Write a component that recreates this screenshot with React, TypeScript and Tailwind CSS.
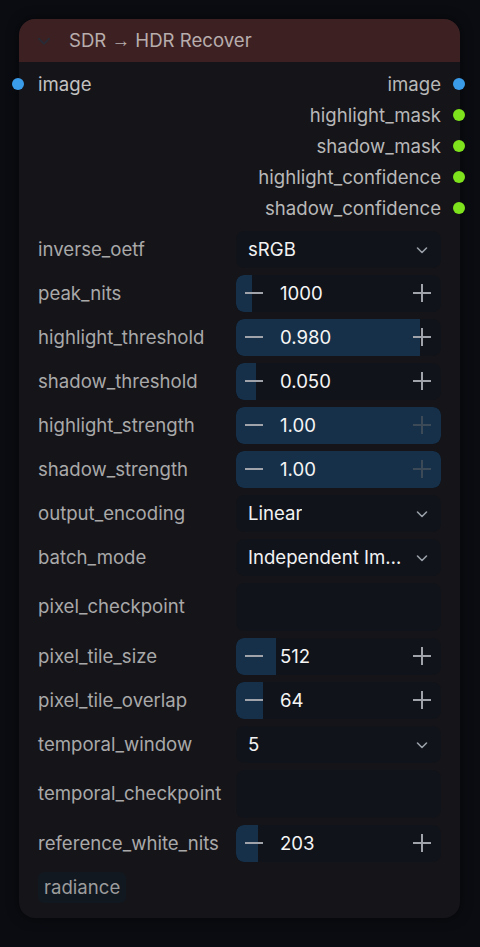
import React from 'react';

type Widget =
  | { kind: 'combo'; label: string; value: string }
  | { kind: 'number'; label: string; value: string; fill: number; atMax?: boolean }
  | { kind: 'text'; label: string };

const outputs = [
  { name: 'image', color: 'bg-[#3a9be9]' },
  { name: 'highlight_mask', color: 'bg-[#7ee21c]' },
  { name: 'shadow_mask', color: 'bg-[#7ee21c]' },
  { name: 'highlight_confidence', color: 'bg-[#7ee21c]' },
  { name: 'shadow_confidence', color: 'bg-[#7ee21c]' },
];

const widgets: Widget[] = [
  { kind: 'combo', label: 'inverse_oetf', value: 'sRGB' },
  { kind: 'number', label: 'peak_nits', value: '1000', fill: 16 },
  { kind: 'number', label: 'highlight_threshold', value: '0.980', fill: 184 },
  { kind: 'number', label: 'shadow_threshold', value: '0.050', fill: 20 },
  { kind: 'number', label: 'highlight_strength', value: '1.00', fill: 205, atMax: true },
  { kind: 'number', label: 'shadow_strength', value: '1.00', fill: 205, atMax: true },
  { kind: 'combo', label: 'output_encoding', value: 'Linear' },
  { kind: 'combo', label: 'batch_mode', value: 'Independent Im…' },
  { kind: 'text', label: 'pixel_checkpoint' },
  { kind: 'number', label: 'pixel_tile_size', value: '512', fill: 40 },
  { kind: 'number', label: 'pixel_tile_overlap', value: '64', fill: 27 },
  { kind: 'combo', label: 'temporal_window', value: '5' },
  { kind: 'text', label: 'temporal_checkpoint' },
  { kind: 'number', label: 'reference_white_nits', value: '203', fill: 22 },
];

function Chevron({ className, size = 14 }: { className?: string; size?: number }) {
  return (
    <svg className={className} width={size} height={size} viewBox="0 0 14 14" fill="none">
      <path d="M2.5 5l4.5 4.5L11.5 5" stroke="currentColor" strokeWidth="1.6" strokeLinecap="round" strokeLinejoin="round" />
    </svg>
  );
}

function Minus({ className }: { className?: string }) {
  return (
    <svg className={className} width="20" height="20" viewBox="0 0 20 20" fill="none">
      <path d="M1 10h18" stroke="currentColor" strokeWidth="2" />
    </svg>
  );
}

function Plus({ className }: { className?: string }) {
  return (
    <svg className={className} width="20" height="20" viewBox="0 0 20 20" fill="none">
      <path d="M1 10h18M10 1v18" stroke="currentColor" strokeWidth="2" />
    </svg>
  );
}

function WidgetControl({ w }: { w: Widget }) {
  if (w.kind === 'combo') {
    return (
      <div className="flex h-[37px] w-[205px] items-center justify-between rounded-lg bg-[#10131a] pl-3 pr-[12px] text-[#f2f2f2]">
        <span className="truncate">{w.value}</span>
        <Chevron className="shrink-0 text-[#9aa0a8]" />
      </div>
    );
  }
  if (w.kind === 'text') {
    return <div className="h-[48px] w-[205px] rounded-lg bg-[#10131a]" />;
  }
  const full = w.fill >= 205;
  return (
    <div className="relative flex h-[37px] w-[205px] items-center overflow-hidden rounded-lg bg-[#10131a]">
      <div
        className={`absolute inset-y-0 left-0 bg-[#163049] ${full ? 'rounded-lg' : 'rounded-l-lg'}`}
        style={{ width: w.fill }}
      />
      <div className="relative flex w-full items-center">
        <Minus className="ml-[8px] text-[#a0a4aa]" />
        <span className="ml-[16px] flex-1 text-[#f5f5f5]">{w.value}</span>
        <Plus className={`mr-[9px] ${w.atMax ? 'text-[#3c4a58]' : 'text-[#a0a4aa]'}`} />
      </div>
    </div>
  );
}

export default function App() {
  return (
    <div
      className="min-h-[947px] w-[480px] bg-[#0a0c11] pt-[19px] pl-[19px]"
      style={{ fontFamily: 'Inter, "Noto Sans", sans-serif' }}
    >
      <div className="relative w-[441px] rounded-[16px] bg-[#151419] text-[18.6px] shadow-[0_0_12px_rgba(0,0,0,0.5)]">
        {/* Header */}
        <div className="flex h-[43px] items-center rounded-t-[16px] bg-[#3d2122] pl-[17px]">
          <Chevron size={16} className="text-[#282b36]" />
          <span className="ml-[17px] text-[#b8adad]">
            SDR <span style={{ fontFamily: '"Liberation Sans", sans-serif' }}>→</span> HDR Recover
          </span>
        </div>

        {/* Slots */}
        <div className="relative pt-[7px]">
          {outputs.map((o, i) => (
            <div key={o.name} className="relative flex h-[31px] items-center justify-between">
              {i === 0 ? (
                <div className="flex items-center">
                  <span className="-ml-[7px] h-[12px] w-[12px] rounded-full bg-[#3a9be9]" />
                  <span className="ml-[14px] text-[#c2c2c2]">image</span>
                </div>
              ) : (
                <span />
              )}
              <div className="flex items-center">
                <span className="text-[#b8b8b8]">{o.name}</span>
                <span className={`ml-[12px] -mr-[5px] h-[12px] w-[12px] rounded-full ${o.color}`} />
              </div>
            </div>
          ))}
        </div>

        {/* Widgets */}
        <div className="mt-[7px] flex flex-col gap-[7px] px-[19px]">
          {widgets.map((w) => (
            <div key={w.label} className="flex items-center justify-between">
              <span className="text-[#a9a9a9]">{w.label}</span>
              <WidgetControl w={w} />
            </div>
          ))}
        </div>

        {/* Badge */}
        <div className="px-[19px] pt-[10px] pb-[15px]">
          <span className="inline-flex h-[31px] items-center rounded-md bg-[#121820] px-[6px] text-[#9c9c9c]">
            radiance
          </span>
        </div>
      </div>
    </div>
  );
}
